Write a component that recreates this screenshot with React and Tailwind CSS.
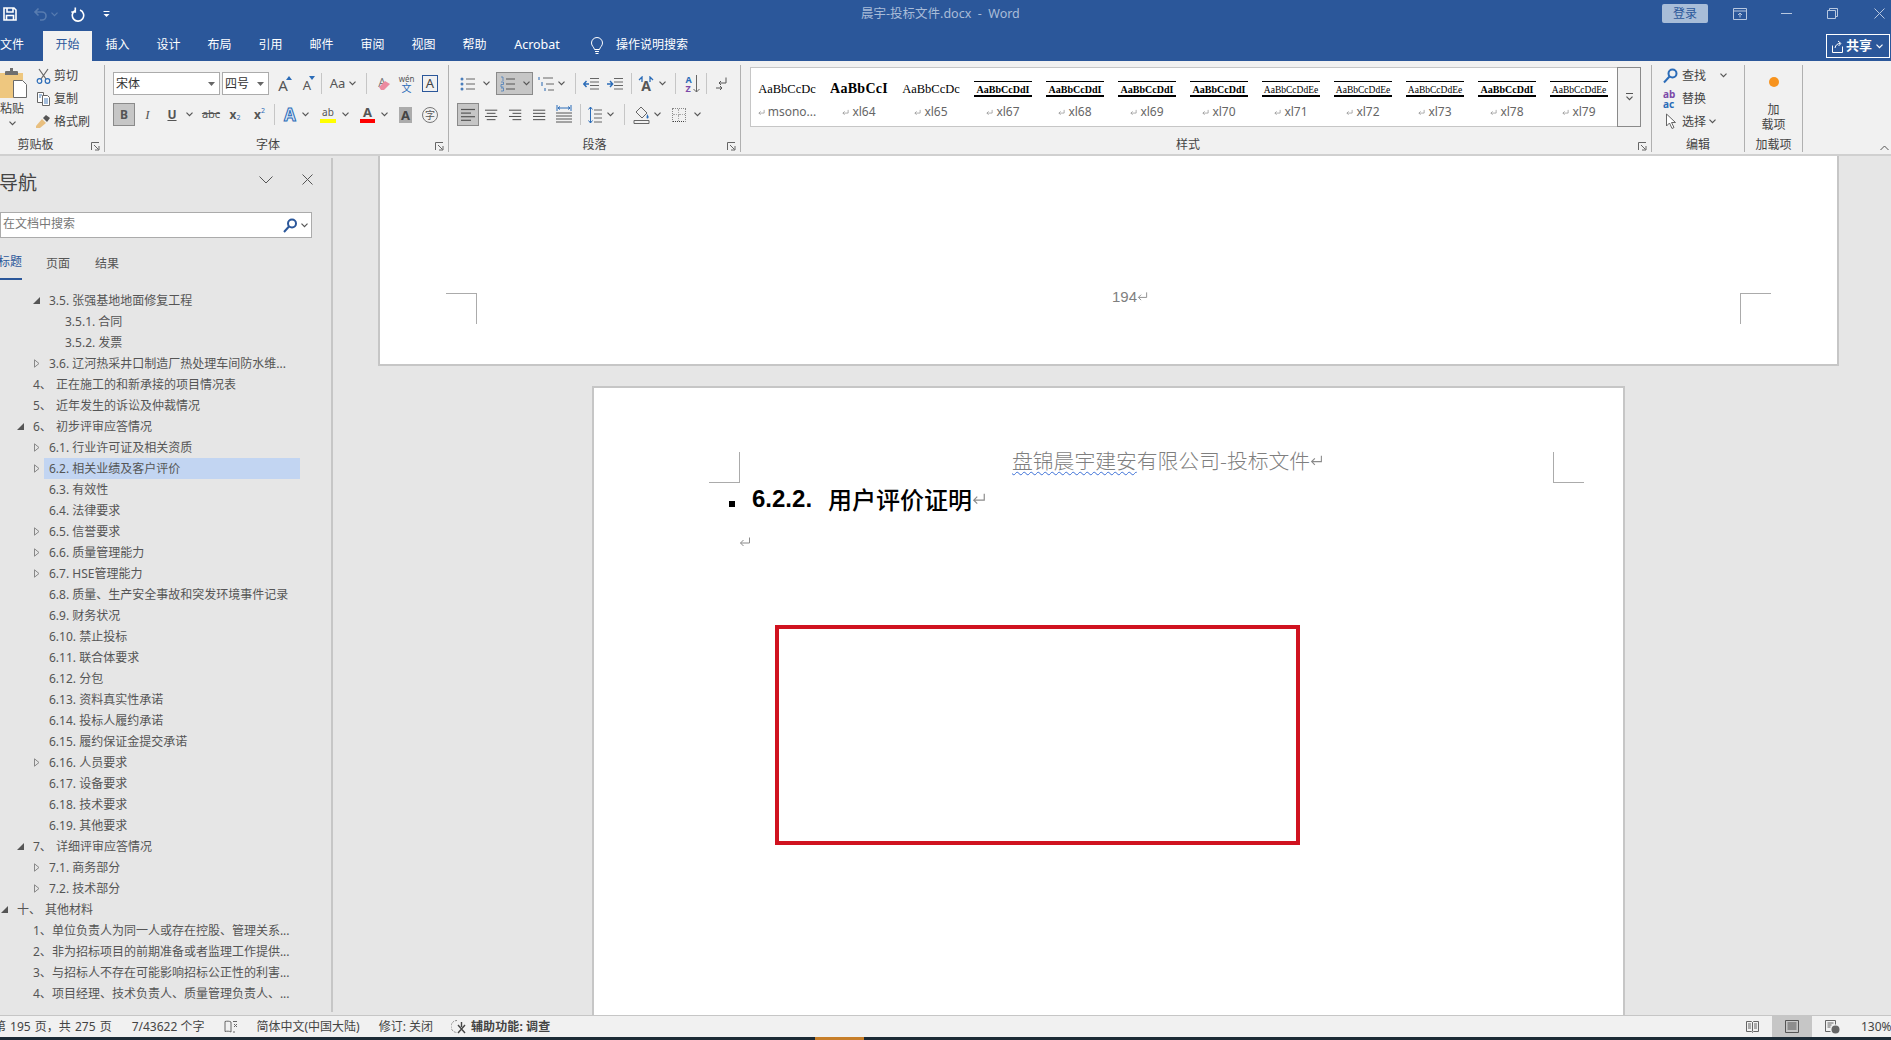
import React from 'react';

const Chev = ({ c = '#555', className = '' }) => (
  <svg width="7" height="5" viewBox="0 0 7 5" className={`shrink-0 ${className}`}><path d="M.5.7 3.5 3.7 6.5.7" stroke={c} fill="none" strokeWidth="1.2" /></svg>
);
const Sep = ({ className = '' }) => <div className={`w-px h-[21px] bg-[#c6c6c6] shrink-0 self-center ${className}`} />;
const Launcher = ({ className }) => (
  <svg width="9" height="9" viewBox="0 0 9 9" className={`absolute bottom-[1px] ${className}`}><path d="M.5 8V.5H8M3 3l4.5 4.5M4 8h4V4" stroke="#666" fill="none" /></svg>
);
const Ret = ({ w = 12, h = 12, c = '#8a8a8a', className = '' }) => (
  <svg width={w} height={h} viewBox="0 0 12 12" className={`shrink-0 ${className}`}><path d="M10.5 1.5v5.5H1.5M4.5 4 1.5 7l3 3" stroke={c} fill="none" strokeWidth="1" /></svg>
);
const Lines = ({ rows, c = '#555' }) => (
  <svg width="16" height="14" viewBox="0 0 16 14">
    {rows.map((r, i) => <path key={i} d={`M${r[0]} ${1.5 + i * 3.6}H${r[1]}`} stroke={c} strokeWidth="1.2" />)}
  </svg>
);
const Crop = ({ kind }) => {
  const cls = {
    br: 'border-r border-b',
    bl: 'border-l border-b',
    tr: 'border-r border-t',
    tl: 'border-l border-t',
  }[kind];
  return <div className={`w-[31px] h-[31px] shrink-0 border-[#ababab] ${cls}`} />;
};
const Slot = ({ className = '', children }) => (
  <div className={`shrink-0 h-full flex items-center justify-center ${className}`}>{children}</div>
);

function TitleBar() {
  return (
    <div className="h-[31px] shrink-0 bg-[#2b579a] flex items-center">
      <div className="w-[861px] shrink-0 flex items-center -mt-[3px]">
        <svg width="14" height="14" viewBox="0 0 14 14" className="ml-[3px]" fill="none" stroke="#fff" strokeWidth="1.6"><path d="M1 1h10l2 2v10H1zM4 1v4h6V1M3.500 13V8.500h7V13" /></svg>
        <svg width="15" height="14" viewBox="0 0 15 14" className="ml-[16px]" fill="none" stroke="#587cb0" strokeWidth="1.6"><path d="M5.500 1.500 2 5l3.500 3.500M2 5h7a4 4 0 0 1 0 8H7" /></svg>
        <Chev c="#587cb0" className="ml-[3px]" />
        <svg width="15" height="15" viewBox="0 0 15 15" className="ml-[12px]" fill="none" stroke="#fff" strokeWidth="1.6"><path d="M5 2.800A5.700 5.700 0 1 0 9.500 2.600M4.800 0v4.500H.8" transform="translate(.5 .5)" /></svg>
        <svg width="7" height="8" viewBox="0 0 7 8" className="ml-[18px]"><path d="M.5 1.500h6" stroke="#fff" /><path d="M.5 4h6L3.500 7z" fill="#fff" /></svg>
      </div>
      <div className="text-[12.5px] text-[#a9bcd8] whitespace-pre leading-none -mt-[3px]">晨宇-投标文件.docx  -  Word</div>
      <div className="ml-auto flex items-center -mt-[4px]">
        <div className="w-[46px] h-[19px] rounded-[2px] bg-[#a8bdd8] text-[#2b579a] text-[12px] leading-[19px] text-center translate-x-[1px]">登录</div>
        <svg width="14" height="12" viewBox="0 0 14 12" className="ml-[26px]" fill="none" stroke="#b8c8e0"><path d="M.5.500h13v11H.5zM.5 3h13M7 9.500V5M5 7l2-2 2 2" /></svg>
        <div className="w-[11px] h-px bg-[#b8c8e0] ml-[34px]" />
        <svg width="11" height="11" viewBox="0 0 11 11" className="ml-[35px]" fill="none" stroke="#b8c8e0"><path d="M.5 2.500h8v8h-8zM2.500 2.500v-2h8v8h-2" /></svg>
        <svg width="11" height="11" viewBox="0 0 11 11" className="ml-[36px] mr-[6px]" fill="none" stroke="#b8c8e0"><path d="M.5.500l10 10M10.500.500l-10 10" /></svg>
      </div>
    </div>
  );
}

function TabRow() {
  const tabs = ['插入', '设计', '布局', '引用', '邮件', '审阅', '视图', '帮助'];
  return (
    <div className="h-[30px] shrink-0 bg-[#2b579a] flex items-stretch text-[12px] text-white leading-none">
      <div className="w-[43px] flex items-center pb-[2px]">文件</div>
      <div className="w-[49px] bg-[#f1f1f1] text-[#2b579a] flex items-center justify-center pb-[2px]">开始</div>
      {tabs.map((t) => <div key={t} className="w-[51px] flex items-center justify-center pb-[2px]">{t}</div>)}
      <div className="w-[74px] flex items-center justify-center pb-[2px] text-[12.500px]">Acrobat</div>
      <div className="ml-[16px] flex items-center">
        <svg width="14" height="18" viewBox="0 0 14 18" fill="none" stroke="#fff"><path d="M4.500 12.500C4 10 1.500 9 1.500 6a5.500 5.500 0 0 1 11 0c0 3-2.500 4-3 6.500zM5 14.500h4M5.500 16.500h3" /></svg>
      </div>
      <div className="ml-[12px] flex items-center pb-[2px]">操作说明搜索</div>
      <div className="ml-auto mr-[1px] mt-[3px] mb-[3px] w-[64px] border border-white flex items-center pl-[4px]">
        <svg width="13" height="14" viewBox="0 0 13 14" fill="none" stroke="#fff"><path d="M1.500 6.500v7h10v-6M4 9c.5-3 2.500-4.500 5-4.500M7 2l3 2.500L7.500 7" /></svg>
        <span className="ml-[2px] font-bold text-[13px] -mt-[2px]">共享</span>
        <Chev c="#fff" className="ml-[4px]" />
      </div>
    </div>
  );
}

function ClipboardGroup() {
  const rows = [
    ['剪切', <svg key="a" width="15" height="16" viewBox="0 0 15 16" fill="none"><path d="M3 1l7 10M12 1 5 11" stroke="#666" strokeWidth="1.2" /><circle cx="3.500" cy="13" r="2.300" stroke="#2b6cb8" strokeWidth="1.200" /><circle cx="11.500" cy="13" r="2.300" stroke="#2b6cb8" strokeWidth="1.200" /></svg>],
    ['复制', <svg key="b" width="15" height="15" viewBox="0 0 15 15" fill="#fff" stroke="#666"><path d="M1.500 1.500h6v10h-6z" /><path d="M6.500 4.500h5l2 2v8h-7z" /><path d="M8 8h4M8 10h4M8 12h4M3 4h3M3 6h2" stroke="#4a7ebb" /></svg>],
    ['格式刷', <svg key="c" width="16" height="15" viewBox="0 0 16 15"><path d="M1 12 7 5l4 4-6 5-4 0z" fill="#e8bf7f" /><path d="M8 4l3-3 4 3-3 4z" fill="#555" /></svg>],
  ];
  return (
    <div className="relative w-[105px] shrink-0 flex flex-col border-r border-[#b0b0b0]">
      <div className="flex">
        <div className="w-[30px] shrink-0 flex flex-col items-start">
          <svg width="28" height="30" viewBox="0 0 28 30" className="mt-[3px]">
            <path d="M0 5h23v25H0z" fill="#eec77f" />
            <path d="M6 3h4V0h3v3h4a1 1 0 0 1 1 1v3H5V4a1 1 0 0 1 1-1z" fill="#6f6f6f" />
            <path d="M13.500 12.500h9l4 4v13h-13z" fill="#fff" stroke="#6a6a6a" />
          </svg>
          <div className="text-[12px] leading-none mt-[5px] text-[#444]">粘贴</div>
          <Chev className="ml-[9px] mt-[6px]" />
        </div>
        <div className="flex flex-col -mt-[1px]">
          {rows.map(([t, ic]) => (
            <div key={t} className="h-[23px] flex items-center ml-[5px]">
              <div className="w-[16px] flex justify-center">{ic}</div>
              <span className="ml-[3px] text-[12px] leading-none text-[#444]">{t}</span>
            </div>
          ))}
        </div>
      </div>
      <div className="mt-auto h-[14px] w-[71px] text-center text-[12px] leading-[14px] text-[#444]">剪贴板</div>
      <Launcher className="right-[4px]" />
    </div>
  );
}

function FontGroup() {
  return (
    <div className="relative w-[344px] shrink-0 flex flex-col border-r border-[#b0b0b0] pt-[7px] pl-[8px] text-[#555]">
      <div className="h-[23px] flex">
        <div className="w-[107px] h-full bg-white border border-[#ababab] flex items-center pl-[2px] text-[12px] leading-none text-[#333]">
          宋体
          <svg width="7" height="4" viewBox="0 0 7 4" className="ml-auto mr-[4px]"><path d="M0 0h7L3.500 4z" fill="#666" /></svg>
        </div>
        <div className="w-[47px] ml-[2px] h-full bg-white border border-[#ababab] flex items-center pl-[2px] text-[12px] leading-none text-[#333]">
          四号
          <svg width="7" height="4" viewBox="0 0 7 4" className="ml-auto mr-[4px]"><path d="M0 0h7L3.500 4z" fill="#666" /></svg>
        </div>
        <Slot className="w-[15px] ml-[8px] relative">
          <span className="text-[15px] leading-none mt-[4px] -ml-[3px]">A</span>
          <svg width="6" height="4" viewBox="0 0 6 4" className="absolute right-0 top-[4px]"><path d="M0 4h6L3 0z" fill="#2b6cb8" /></svg>
        </Slot>
        <Slot className="w-[13px] ml-[10px] relative">
          <span className="text-[13px] leading-none mt-[4px] -ml-[3px]">A</span>
          <svg width="6" height="4" viewBox="0 0 6 4" className="absolute right-0 top-[4px]"><path d="M0 0h6L3 4z" fill="#2b6cb8" /></svg>
        </Slot>
        <Sep className="ml-[6px]" />
        <Slot className="w-[17px] ml-[7px] text-[13px] leading-none">Aa</Slot>
        <Slot className="w-[7px] ml-[3px]"><Chev /></Slot>
        <Sep className="ml-[10px]" />
        <Slot className="w-[15px] ml-[9px] relative">
          <span className="text-[12px] leading-none -ml-[3px] -mt-[2px] text-[#777]">A</span>
          <svg width="13" height="11" viewBox="0 0 13 11" className="absolute left-[2px] top-[8px]"><path d="M1 7 7 1l5 3-6 6H3z" fill="#ec8ba0" /></svg>
        </Slot>
        <Slot className="w-[15px] ml-[8px] flex-col">
          <span className="text-[8px] leading-[9px] text-[#555]">wén</span>
          <span className="text-[10px] leading-[10px] text-[#2b6cb8]">文</span>
        </Slot>
        <Slot className="w-[16px] ml-[8px]">
          <div className="w-[16px] h-[17px] border border-[#2b579a] text-[13px] leading-[15px] text-center text-[#444]">A</div>
        </Slot>
      </div>
      <div className="h-[23px] mt-[8px] flex">
        <div className="w-[22px] h-full bg-[#c6c6c6] border border-[#8a8a8a] flex items-center justify-center font-bold text-[12px] leading-none">B</div>
        <Slot className="w-[15px] ml-[5px] italic text-[13px] font-['Liberation_Serif',serif]">I</Slot>
        <Slot className="w-[14px] ml-[10px] underline font-bold text-[12px]">U</Slot>
        <Slot className="w-[7px] ml-[7px]"><Chev /></Slot>
        <Slot className="w-[20px] ml-[8px] text-[11px] line-through">abc</Slot>
        <Slot className="w-[16px] ml-[6px] text-[12px] font-bold">x<span className="text-[7px] text-[#2b6cb8] mt-[7px] font-normal">2</span></Slot>
        <Slot className="w-[17px] ml-[8px] text-[12px] font-bold">x<span className="text-[7px] text-[#2b6cb8] -mt-[7px] font-normal">2</span></Slot>
        <Sep className="ml-[6px]" />
        <Slot className="w-[14px] ml-[8px] text-[17px] font-bold text-[#dbe8f6] [-webkit-text-stroke:1px_#2b6cb8]">A</Slot>
        <Slot className="w-[7px] ml-[5px]"><Chev /></Slot>
        <div className="w-[16px] ml-[11px] h-full flex flex-col items-center justify-center">
          <span className="text-[10px] leading-[13px] -mt-[1px]">ab</span>
          <div className="w-[16px] h-[4px] bg-[#ffff00]" />
        </div>
        <Slot className="w-[7px] ml-[6px]"><Chev /></Slot>
        <div className="w-[15px] ml-[11px] h-full flex flex-col items-center justify-center">
          <span className="text-[13px] leading-[13px] font-bold">A</span>
          <div className="w-[15px] h-[4px] bg-[#ff0000]" />
        </div>
        <Slot className="w-[7px] ml-[6px]"><Chev /></Slot>
        <Slot className="w-[13px] ml-[11px]">
          <div className="w-[13px] h-[16px] bg-[#ababab] text-center text-[13px] leading-[16px] font-bold text-[#444]">A</div>
        </Slot>
        <Slot className="w-[16px] ml-[10px]">
          <div className="w-[16px] h-[16px] rounded-full border border-[#777] text-center text-[10px] leading-[14px]">字</div>
        </Slot>
      </div>
      <div className="mt-auto h-[14px] w-[310px] text-center text-[12px] leading-[14px] text-[#444]">字体</div>
      <Launcher className="right-[4px]" />
    </div>
  );
}

function ParagraphGroup() {
  const bl = '#4a7ebb';
  return (
    <div className="relative w-[292px] shrink-0 flex flex-col border-r border-[#b0b0b0] pt-[7px] text-[#555]">
      <div className="h-[23px] flex pl-[11px]">
        <Slot className="w-[16px]">
          <svg width="16" height="16" viewBox="0 0 16 16"><path d="M6 3h9M6 8h9M6 13h9" stroke="#666" /><circle cx="2" cy="3" r="1.500" fill={bl} /><circle cx="2" cy="8" r="1.500" fill={bl} /><circle cx="2" cy="13" r="1.500" fill={bl} /></svg>
        </Slot>
        <Slot className="w-[7px] ml-[7px]"><Chev /></Slot>
        <div className="w-[37px] ml-[6px] h-full bg-[#c6c6c6] border border-[#8a8a8a] flex items-center pl-[3px]">
          <svg width="16" height="16" viewBox="0 0 16 16"><path d="M6 3h9M6 8h9M6 13h9" stroke="#555" /><path d="M1 1h2v4M1 6h2.500v2.500H1V11h2.500M1 12h2.500v3H1" stroke={bl} fill="none" strokeWidth=".8" /></svg>
          <Chev className="ml-[7px]" />
        </div>
        <Slot className="w-[17px] ml-[5px]">
          <svg width="17" height="16" viewBox="0 0 17 16"><path d="M5 2h10M8 8h8M10 14h6" stroke="#666" /><path d="M1 1v3M4 6v4M7 12v3" stroke={bl} strokeWidth="1.200" /></svg>
        </Slot>
        <Slot className="w-[7px] ml-[3px]"><Chev /></Slot>
        <Sep className="ml-[10px]" />
        <Slot className="w-[16px] ml-[7px]">
          <svg width="16" height="14" viewBox="0 0 16 14"><path d="M7 1.500h9M7 5h9M7 8.500h9M7 12h9" stroke="#666" /><path d="M6 7H1M3.500 4 .8 7l2.700 3" stroke="#2b6cb8" fill="none" strokeWidth="1.400" /></svg>
        </Slot>
        <Slot className="w-[16px] ml-[8px]">
          <svg width="16" height="14" viewBox="0 0 16 14"><path d="M7 1.500h9M7 5h9M7 8.500h9M7 12h9" stroke="#666" /><path d="M0 7h5M3 4l2.700 3L3 10" stroke="#2b6cb8" fill="none" strokeWidth="1.400" /></svg>
        </Slot>
        <Sep className="ml-[8px]" />
        <Slot className="w-[16px] ml-[6px] relative">
          <span className="text-[14px] leading-none font-bold mt-[5px]">A</span>
          <svg width="16" height="6" viewBox="0 0 16 6" className="absolute top-[4px] left-0"><path d="M1 4l3-3v6M15 4l-3-3v6" stroke="#2b6cb8" fill="none" strokeWidth="1.300" /></svg>
        </Slot>
        <Slot className="w-[7px] ml-[5px]"><Chev /></Slot>
        <Sep className="ml-[9px]" />
        <Slot className="w-[15px] ml-[9px] flex-row">
          <span className="flex flex-col text-[9px] leading-[9px] font-bold"><span className="text-[#2b6cb8]">A</span><span className="text-[#7b4aa8]">Z</span></span>
          <svg width="7" height="18" viewBox="0 0 7 18" className="ml-[1px]"><path d="M3.500 0v17M.5 14l3 3 3-3" stroke="#666" fill="none" /></svg>
        </Slot>
        <Sep className="ml-[6px]" />
        <Slot className="w-[11px] ml-[9px]">
          <svg width="11" height="14" viewBox="0 0 11 14" fill="none"><path d="M10 .5V6H3M5 4 3 6l2 2" stroke="#555" /><path d="M0 11h6M4 9l2 2-2 2" stroke="#555" /></svg>
        </Slot>
      </div>
      <div className="h-[23px] mt-[8px] flex pl-[8px]">
        <div className="w-[22px] h-full bg-[#c6c6c6] border border-[#8a8a8a] flex items-center justify-center">
          <Lines rows={[[1, 15], [1, 11], [1, 15], [1, 11]]} />
        </div>
        <Slot className="w-[14px] ml-[6px]"><Lines rows={[[0, 14], [2, 12], [0, 14], [2, 12]]} /></Slot>
        <Slot className="w-[14px] ml-[10px]"><Lines rows={[[0, 14], [4, 14], [0, 14], [4, 14]]} /></Slot>
        <Slot className="w-[14px] ml-[10px]"><Lines rows={[[0, 14], [0, 14], [0, 14], [0, 14]]} /></Slot>
        <Slot className="w-[16px] ml-[9px]">
          <svg width="16" height="19" viewBox="0 0 16 19"><path d="M1 0v6M15 0v6" stroke="#2b6cb8" /><path d="M2 3h12M4 1.500 2 3l2 1.500M12 1.500 14 3l-2 1.500" stroke="#2b6cb8" fill="none" /><path d="M0 8h16M0 11h16M0 14h16M0 17h16" stroke="#555" /></svg>
        </Slot>
        <Sep className="ml-[8px]" />
        <Slot className="w-[14px] ml-[7px]">
          <svg width="14" height="18" viewBox="0 0 14 18"><path d="M6 4h8M6 8h8M6 12h8M6 16h8" stroke="#666" /><path d="M2.500 1v16M.5 3.500l2-2.500 2 2.500M.5 14.500l2 2.500 2-2.500" stroke="#2b6cb8" fill="none" /></svg>
        </Slot>
        <Slot className="w-[7px] ml-[5px]"><Chev /></Slot>
        <Sep className="ml-[10px]" />
        <Slot className="w-[17px] ml-[8px]">
          <svg width="17" height="18" viewBox="0 0 17 18" fill="none"><path d="M8 1l6 6-5 5-6-6z" stroke="#666" /><path d="M14 8c1 1.500 2 2.500 1.500 3.500a1 1 0 0 1-2 0c0-1 .5-2 .5-3.500" fill="#2b6cb8" /><path d="M1 14.500h15v3H1z" stroke="#666" /></svg>
        </Slot>
        <Slot className="w-[7px] ml-[4px]"><Chev /></Slot>
        <Slot className="w-[14px] ml-[11px]">
          <div className="w-[14px] h-[14px] border border-dotted border-[#888] border-b-[#444] grid grid-cols-2"><div className="border-r border-b border-dotted border-[#aaa]" /><div className="border-b border-dotted border-[#aaa]" /><div className="border-r border-dotted border-[#aaa]" /></div>
        </Slot>
        <Slot className="w-[7px] ml-[8px]"><Chev /></Slot>
      </div>
      <div className="mt-auto h-[14px] text-center text-[12px] leading-[14px] text-[#444]">段落</div>
      <Launcher className="right-[4px]" />
    </div>
  );
}

function Style({ name, kind }) {
  const prev = {
    plain: 'text-[12.500px] font-normal',
    big: 'text-[14px] font-bold tracking-[.3px]',
    box: 'text-[10px] font-bold border-t border-b-2 border-black leading-[13px] h-[16px]',
    boxn: 'text-[9.500px] font-normal border-t border-b-2 border-black leading-[13px] h-[16px]',
  }[kind];
  const label = { big: 'AaBbCcI', plain: 'AaBbCcDc', box: 'AaBbCcDdI', boxn: 'AaBbCcDdEe' }[kind];
  return (
    <div className="w-[72px] shrink-0 pl-[7px]">
      <div className={`w-[58px] h-[16px] overflow-hidden whitespace-nowrap text-black text-center font-['Liberation_Serif',serif] leading-[16px] ${prev}`}>{label}</div>
      <div className="w-[58px] mt-[9px] flex items-center justify-center text-[12px] leading-none text-[#666]">
        <Ret w={7} h={7} c="#777" className="mr-[3px]" />{name}
      </div>
    </div>
  );
}

function StylesGroup() {
  const items = [['msono...', 'plain'], ['xl64', 'big'], ['xl65', 'plain'], ['xl67', 'box'], ['xl68', 'box'], ['xl69', 'box'], ['xl70', 'box'], ['xl71', 'boxn'], ['xl72', 'boxn'], ['xl73', 'boxn'], ['xl78', 'box'], ['xl79', 'boxn']];
  return (
    <div className="relative w-[911px] shrink-0 flex flex-col border-r border-[#b0b0b0] pt-[2px]">
      <div className="ml-[9px] w-[891px] h-[60px] bg-white border-y border-l border-[#c6c6c6] flex">
        <div className="flex-1 flex overflow-hidden pt-[13px]">
          {items.map(([n, k]) => <Style key={n} name={n} kind={k} />)}
        </div>
        <div className="w-[24px] -my-px border border-[#8a8a8a] bg-[#f1f1f1] flex flex-col items-center justify-center">
          <div className="w-[7px] h-px bg-[#555] mb-[2px]" />
          <Chev />
        </div>
      </div>
      <div className="mt-auto h-[14px] w-[894px] text-center text-[12px] leading-[14px] text-[#444]">样式</div>
      <Launcher className="right-[4px]" />
    </div>
  );
}

function EditGroup() {
  return (
    <div className="w-[93px] shrink-0 flex flex-col border-r border-[#b0b0b0] text-[12px] leading-none text-[#444]">
      <div className="h-[23px] -mt-[1px] flex items-center pl-[11px]">
        <svg width="15" height="16" viewBox="0 0 15 16" fill="none" stroke="#2b6cb8" strokeWidth="2"><circle cx="9.500" cy="5.500" r="4" /><path d="M6.500 8.500 1 14.500" /></svg>
        <span className="ml-[4px]">查找</span>
        <Chev className="ml-[14px]" />
      </div>
      <div className="h-[23px] flex items-center pl-[11px]">
        <span className="w-[15px] flex flex-col text-[10px] leading-[10px] font-bold"><span className="text-[#7b4aa8]">ab</span><span className="text-[#2b6cb8]">ac</span></span>
        <span className="ml-[4px]">替换</span>
      </div>
      <div className="h-[23px] flex items-center pl-[11px]">
        <svg width="15" height="17" viewBox="0 0 15 17" fill="#fff" stroke="#666"><path d="M3.500 1v12l3-3 2.500 5.500 2-1-2.500-5H12.500z" /></svg>
        <span className="ml-[4px]">选择</span>
        <Chev className="ml-[3px]" />
      </div>
      <div className="mt-auto h-[14px] text-center text-[12px] leading-[14px]">编辑</div>
    </div>
  );
}

function AddinGroup() {
  return (
    <div className="w-[58px] shrink-0 flex flex-col items-center border-r border-[#b0b0b0] text-[12px] text-[#444]">
      <div className="w-[10px] h-[10px] rounded-full bg-[#f7931e] mt-[12px] blur-[.5px]" />
      <div className="mt-[15px] leading-[15px] text-center">加<br />载项</div>
      <div className="mt-auto h-[14px] leading-[14px] text-center">加载项</div>
    </div>
  );
}

function Ribbon() {
  return (
    <div className="h-[95px] shrink-0 bg-[#f1f1f1] border-b-2 border-[#d0d0d0] flex items-stretch pt-[4px] pb-[2px] relative">
      <ClipboardGroup />
      <FontGroup />
      <ParagraphGroup />
      <StylesGroup />
      <EditGroup />
      <AddinGroup />
      <svg width="9" height="6" viewBox="0 0 9 6" className="absolute right-[2px] bottom-[3px]"><path d="M.5 5 4.500 1l4 4" stroke="#555" fill="none" /></svg>
    </div>
  );
}

const ROWS = [
  { x: 33, tri: 'e', t: '3.5. 张强基地地面修复工程' },
  { x: 49, t: '3.5.1. 合同' },
  { x: 49, t: '3.5.2. 发票' },
  { x: 33, tri: 'c', t: '3.6. 辽河热采井口制造厂热处理车间防水维...' },
  { x: 17, n: '4、', t: '正在施工的和新承接的项目情况表' },
  { x: 17, n: '5、', t: '近年发生的诉讼及仲裁情况' },
  { x: 17, tri: 'e', n: '6、', t: '初步评审应答情况' },
  { x: 33, tri: 'c', t: '6.1. 行业许可证及相关资质' },
  { x: 33, tri: 'c', t: '6.2. 相关业绩及客户评价', sel: true },
  { x: 33, t: '6.3. 有效性' },
  { x: 33, t: '6.4. 法律要求' },
  { x: 33, tri: 'c', t: '6.5. 信誉要求' },
  { x: 33, tri: 'c', t: '6.6. 质量管理能力' },
  { x: 33, tri: 'c', t: '6.7. HSE管理能力' },
  { x: 33, t: '6.8. 质量、生产安全事故和突发环境事件记录' },
  { x: 33, t: '6.9. 财务状况' },
  { x: 33, t: '6.10. 禁止投标' },
  { x: 33, t: '6.11. 联合体要求' },
  { x: 33, t: '6.12. 分包' },
  { x: 33, t: '6.13. 资料真实性承诺' },
  { x: 33, t: '6.14. 投标人履约承诺' },
  { x: 33, t: '6.15. 履约保证金提交承诺' },
  { x: 33, tri: 'c', t: '6.16. 人员要求' },
  { x: 33, t: '6.17. 设备要求' },
  { x: 33, t: '6.18. 技术要求' },
  { x: 33, t: '6.19. 其他要求' },
  { x: 17, tri: 'e', n: '7、', t: '详细评审应答情况' },
  { x: 33, tri: 'c', t: '7.1. 商务部分' },
  { x: 33, tri: 'c', t: '7.2. 技术部分' },
  { x: 1, tri: 'e', n: '十、', wide: true, t: '其他材料' },
  { x: 17, n: '1、', t: '单位负责人为同一人或存在控股、管理关系...' },
  { x: 17, n: '2、', t: '非为招标项目的前期准备或者监理工作提供...' },
  { x: 17, n: '3、', t: '与招标人不存在可能影响招标公正性的利害...' },
  { x: 17, n: '4、', t: '项目经理、技术负责人、质量管理负责人、...' },
];
const INDENT = { 1: 'pl-[1px]', 17: 'pl-[17px]', 33: 'pl-[33px]', 49: 'pl-[49px]' };

function NavRow({ r }) {
  return (
    <div className={`h-[21px] flex items-center text-[12px] leading-none text-[#555] whitespace-nowrap ${INDENT[r.x]}`}>
      <div className="w-[11px] shrink-0 flex items-center">
        {r.tri === 'e' && <svg width="7" height="7" viewBox="0 0 7 7"><path d="M7 0v7H0z" fill="#555" /></svg>}
        {r.tri === 'c' && <svg width="6" height="9" viewBox="0 0 6 9" className="ml-[1px]"><path d="M.5.800 5 4.500.5 8.200z" fill="none" stroke="#888" /></svg>}
      </div>
      <div className={`h-full flex items-center pl-[5px] w-[256px] ${r.sel ? 'bg-[#c2d5f2]' : ''}`}>
        {r.n && <span className={r.wide ? 'w-[28px]' : 'w-[23px]'}>{r.n}</span>}
        <span>{r.t}</span>
      </div>
    </div>
  );
}

function NavPane() {
  return (
    <div className="w-[333px] shrink-0 pt-[2px] pb-[3px]">
      <div className="h-full border-r-2 border-[#c6c6c6] overflow-hidden">
        <div className="h-[50px] flex items-center">
          <span className="text-[19px] leading-none text-[#444] -ml-[1px]">导航</span>
          <svg width="14" height="8" viewBox="0 0 14 8" className="ml-[222px] -mt-[7px]"><path d="M.5.500 7 7 13.500.500" stroke="#555" fill="none" /></svg>
          <svg width="11" height="11" viewBox="0 0 11 11" className="ml-[29px] -mt-[7px]"><path d="M.5.500l10 10M10.500.500l-10 10" stroke="#555" fill="none" /></svg>
        </div>
        <div className="mt-[4px] h-[26px] w-[312px] bg-white border border-[#ababab] flex items-center text-[12px] leading-none text-[#777] pl-[2px]">
          <span className="-mt-[2px]">在文档中搜索</span>
          <svg width="14" height="15" viewBox="0 0 14 15" className="ml-auto" fill="none" stroke="#2b579a" strokeWidth="2"><circle cx="9" cy="5.500" r="4" /><path d="M6 8.500 1 14" /></svg>
          <Chev className="ml-[4px] mr-[3px]" />
        </div>
        <div className="h-[42px] flex text-[12px] leading-none text-[#555]">
          <div className="w-[22px] h-full overflow-hidden border-b-2 border-[#2b579a] text-[#2b579a] flex items-center justify-end pt-[7px] shrink-0"><span className="shrink-0">标题</span></div>
          <div className="ml-[24px] flex items-center pt-[9px]">页面</div>
          <div className="ml-[25px] flex items-center pt-[9px]">结果</div>
        </div>
        <div className="mt-[10px]">
          {ROWS.map((r) => <NavRow key={r.x + r.t} r={r} />)}
        </div>
      </div>
    </div>
  );
}

function Document() {
  return (
    <div className="flex-1 min-w-0 overflow-hidden flex flex-col">
      <div className="ml-[45px] w-[1461px] h-[210px] shrink-0 bg-white border-x-2 border-b-2 border-[#c6c6c6] pt-[137px] px-[66px] flex items-start">
        <Crop kind="tr" />
        <div className="ml-[635px] h-[16px] -mt-[5px] flex items-center font-['Liberation_Sans',sans-serif] text-[15px] leading-none text-[#7f7f7f]">
          194<Ret w={11} h={11} />
        </div>
        <div className="ml-auto"><Crop kind="tl" /></div>
      </div>
      <div className="ml-[259px] w-[1033px] flex-1 mt-[20px] bg-white border-x-2 border-t-2 border-[#c6c6c6] pt-[64px]">
        <div className="h-[31px] flex items-start pl-[115px] pr-[39px]">
          <Crop kind="br" />
          <div className="ml-[272px] h-[21px] mt-[-2px] flex items-center text-[20.800px] leading-none text-[#7f7f7f] whitespace-nowrap font-['Noto_Sans_CJK_SC',sans-serif] font-light">
            <span className="underline decoration-wavy decoration-[#3b6fd6] decoration-1 underline-offset-2">盘锦晨宇建安</span>有限公司-投标文件<Ret w={13} h={13} />
          </div>
          <div className="ml-auto"><Crop kind="bl" /></div>
        </div>
        <div className="h-[32px] flex items-center pl-[135px] whitespace-nowrap text-black">
          <div className="w-[6px] h-[6px] bg-black mt-[10px]" />
          <span className="ml-[17px] font-['Liberation_Sans',sans-serif] font-bold text-[24px] leading-none">6.2.2.</span>
          <span className="ml-[16px] font-['Noto_Sans_CJK_SC',sans-serif] font-medium text-[24px] leading-none">用户评价证明</span>
          <Ret w={14} h={14} />
        </div>
        <div className="h-[20px] mt-[17px] flex items-center pl-[145px]"><Ret w={12} h={12} /></div>
        <div className="ml-[181px] mt-[73px] w-[525px] h-[220px] border-[4px] border-[#d0121f]" />
      </div>
    </div>
  );
}

function StatusBar() {
  return (
    <div className="h-[22px] shrink-0 bg-[#f1f1f1] border-t border-[#c6c6c6] flex items-center text-[12px] leading-none text-[#444] whitespace-nowrap">
      <span className="-ml-[6px] [word-spacing:1px]">第 195 页，共 275 页</span>
      <span className="ml-[20px]">7/43622 个字</span>
      <svg width="15" height="14" viewBox="0 0 15 14" className="ml-[20px]" fill="none" stroke="#666"><path d="M7 2C5.500 1 3 1 1 1.500v10C3 11 5.500 11 7 12V2" /><path d="M9 1.500h4M9 12h2M10 4l3 3M13 4l-3 3" /></svg>
      <span className="ml-[17px]">简体中文(中国大陆)</span>
      <span className="ml-[19px]">修订: 关闭</span>
      <svg width="16" height="16" viewBox="0 0 16 16" className="ml-[18px]" fill="none"><path d="M6 1.500a6 6 0 1 0 0 12" stroke="#888" strokeDasharray="2 1" /><path d="M7 6l7 8M14 6l-7 8M10.500 3v5" stroke="#444" strokeWidth="1.400" /></svg>
      <span className="ml-[4px] font-bold [letter-spacing:.1px]">辅助功能: 调查</span>
      <div className="ml-auto h-full flex items-center">
        <svg width="13" height="13" viewBox="0 0 13 13" fill="none" stroke="#666"><path d="M.5 1.500h5l1 1 1-1h5v10h-5l-1 1-1-1h-5zM6.500 2.500v9M2 4h3M2 6h3M2 8h3M8 4h3M8 6h3M8 8h3" /></svg>
        <div className="ml-[13px] w-[40px] h-full bg-[#c6c6c6] flex items-center justify-center">
          <svg width="14" height="13" viewBox="0 0 14 13" fill="none" stroke="#555"><path d="M.5.500h13v12H.5zM2.500 3h9M2.500 5h9M2.500 7h9M2.500 9h9" /></svg>
        </div>
        <svg width="15" height="14" viewBox="0 0 15 14" className="ml-[13px]" fill="none" stroke="#666"><path d="M.5.500h10v4M.5.500v11h5M2.500 3h6M2.500 5h4M2.500 7h3" /><circle cx="10.500" cy="9.500" r="4" fill="#666" stroke="none" /></svg>
        <span className="ml-[21px] w-[30px] overflow-hidden">130%</span>
      </div>
    </div>
  );
}

export default function App() {
  return (
    <div className="w-[1891px] h-[1040px] overflow-hidden flex flex-col bg-[#e6e6e6] font-['Noto_Sans','Noto_Sans_CJK_SC',sans-serif]">
      <TitleBar />
      <TabRow />
      <Ribbon />
      <div className="flex-1 min-h-0 flex">
        <NavPane />
        <Document />
      </div>
      <StatusBar />
      <div className="h-[3px] shrink-0 bg-[#1c2b36] flex">
        <div className="ml-[815px] w-[49px] bg-[#c77f2a]" />
      </div>
    </div>
  );
}
